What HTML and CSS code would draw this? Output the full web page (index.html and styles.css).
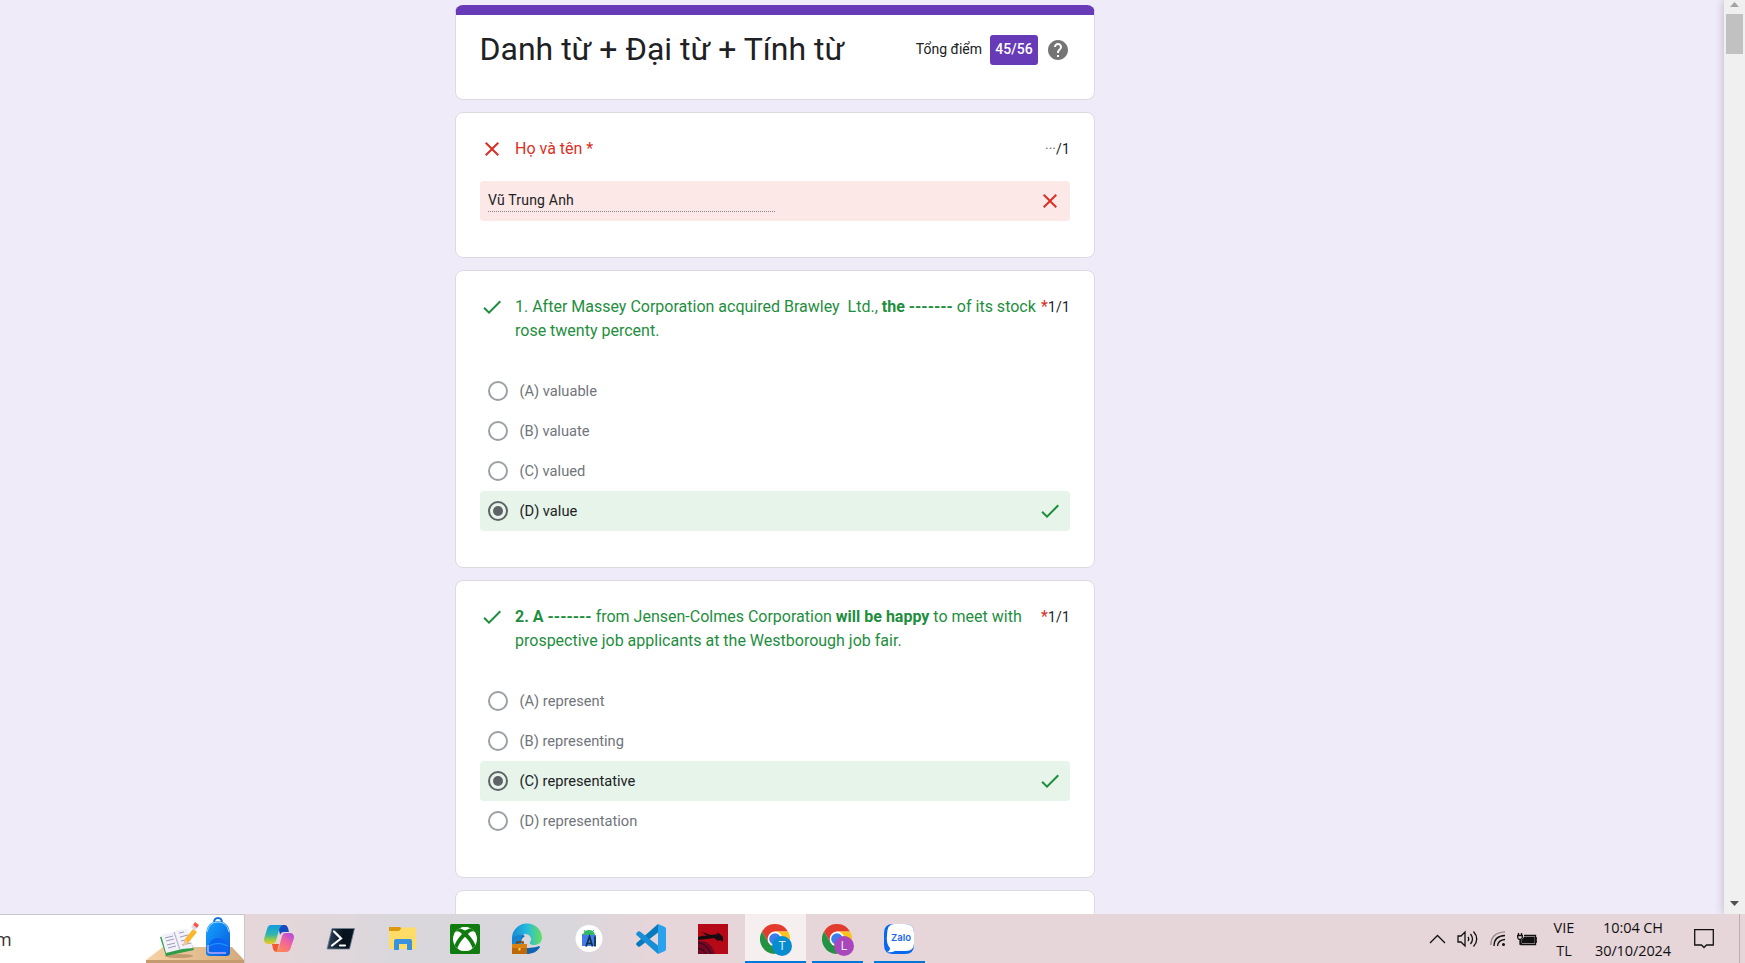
FILE: index.html
```html
<!DOCTYPE html>
<html lang="vi">
<head>
<meta charset="utf-8">
<title>Danh từ + Đại từ + Tính từ</title>
<link rel="stylesheet" href="styles.css">
</head>
<body>
<svg class="defs" aria-hidden="true">
  <symbol id="check" viewBox="0 0 24 24"><path d="M9 16.17 4.83 12l-1.42 1.41L9 19 21 7l-1.41-1.41z"/></symbol>
  <symbol id="cross" viewBox="0 0 24 24"><path d="M19 6.41 17.59 5 12 10.59 6.41 5 5 6.41 10.59 12 5 17.59 6.41 19 12 13.41 17.59 19 19 17.59 13.41 12z"/></symbol>
  <symbol id="chrome" viewBox="0 0 30 30">
    <path fill="#e33b2e" d="M2 7.500A15 15 0 0 1 28 7.500H15L8.500 18.750z"/>
    <path fill="#fcc31e" d="M28 7.500A15 15 0 0 1 15 30L21.500 18.750 15 7.500z"/>
    <path fill="#229342" d="M2 7.500A15 15 0 0 0 15 30L21.500 18.750H8.500z"/>
    <circle cx="15" cy="15" r="7.400" fill="#fff"/><circle cx="15" cy="15" r="5.800" fill="#3b7ded"/>
  </symbol>
</svg>
<div class="screen">
  <div class="browser">
    <main class="form">
      <section class="card header">
        <h1>Danh từ + Đại từ + Tính từ</h1>
        <div class="total"><span>Tổng điểm</span><b>45/56</b>
          <svg class="help" viewBox="0 0 24 24"><path d="M12 2C6.480 2 2 6.480 2 12s4.480 10 10 10 10-4.480 10-10S17.520 2 12 2zm1 17h-2v-2h2v2zm2.070-7.750-.9.920C13.450 12.900 13 13.500 13 15h-2v-.5c0-1.100.450-2.100 1.170-2.830l1.240-1.260c.370-.360.590-.860.590-1.410 0-1.100-.9-2-2-2s-2 .9-2 2H8c0-2.210 1.790-4 4-4s4 1.790 4 4c0 .880-.360 1.680-.930 2.250z"/></svg>
        </div>
      </section>

      <section class="card name">
        <div class="question wrong"><svg class="mark"><use href="#cross"/></svg><p>Họ và tên *</p><span class="points"><i>···</i>/1</span></div>
        <div class="response"><span>Vũ Trung Anh</span><svg class="mark"><use href="#cross"/></svg></div>
      </section>

      <section class="card quiz">
        <div class="question right"><svg class="mark"><use href="#check"/></svg><p>1. After Massey Corporation acquired Brawley&nbsp; Ltd., <b>the -------</b> of its stock rose twenty percent.</p><span class="star">*</span><span class="points">1/1</span></div>
        <div class="options">
          <div class="option"><span class="radio"></span>(A) valuable</div>
          <div class="option"><span class="radio"></span>(B) valuate</div>
          <div class="option"><span class="radio"></span>(C) valued</div>
          <div class="option chosen"><span class="radio"></span>(D) value<svg class="mark"><use href="#check"/></svg></div>
        </div>
      </section>

      <section class="card quiz">
        <div class="question right"><svg class="mark"><use href="#check"/></svg><p><b>2. A -------</b> from Jensen-Colmes Corporation <b>will be happy</b> to meet with prospective job applicants at the Westborough job fair.</p><span class="star">*</span><span class="points">1/1</span></div>
        <div class="options">
          <div class="option"><span class="radio"></span>(A) represent</div>
          <div class="option"><span class="radio"></span>(B) representing</div>
          <div class="option chosen"><span class="radio"></span>(C) representative<svg class="mark"><use href="#check"/></svg></div>
          <div class="option"><span class="radio"></span>(D) representation</div>
        </div>
      </section>
      <section class="card quiz"></section>
    </main>
    <div class="scrollbar">
      <svg class="arrow up" viewBox="0 0 9 5"><path d="M0 5 4.500 0 9 5z"/></svg>
      <div class="thumb"></div>
      <svg class="arrow down" viewBox="0 0 9 5"><path d="M0 0h9L4.500 5z"/></svg>
    </div>
  </div>

  <footer class="taskbar">
    <div class="search"><span>m</span>
      <svg width="98" height="48" viewBox="0 0 98 48">
        <defs><linearGradient id="bag" x1="0" x2="1" y2="1"><stop stop-color="#16a5ff"/><stop offset="1" stop-color="#0758dc"/></linearGradient>
        <linearGradient id="desk"><stop stop-color="#f6d3a6"/><stop offset="1" stop-color="#d4aa7c"/></linearGradient></defs>
        <path d="M0 45 17 32H86L98 45z" fill="url(#desk)"/><path d="M0 45h98v3H0z" fill="#c39b6e"/>
        <ellipse cx="33" cy="41" rx="14" ry="2" fill="#c29b70"/>
        <path d="M14 22 41 17 48 35 20 41z" fill="#2f9e48"/>
        <path d="M15 20 28 17 31 15 41 14 47 33 36 34 20 38z" fill="#f3f2fb"/>
        <path d="M28 17 34 35" stroke="#b9b6cf" stroke-width="1.200"/>
        <path d="m19 23 8-2m-7 5 8-2m-7 6 8-2m-7 5 8-2m3-13 5-1m-4 5 8-2m-7 6 9-2m-8 6 9-2" stroke="#9d9bb5" stroke-width="1"/>
        <path d="m37 31 2-7 8-10 4 3-9 11z" fill="#fdb52a"/><path d="m37 31 2-7 3 4z" fill="#f2c69b"/><path d="m45 12 2-2 4 3-2 3z" fill="#dcdbe8"/><path d="m47 10 2-3 4 3-2 3z" fill="#fb5746"/>
        <path d="M68 8q0-5 4-5t4 5" fill="none" stroke="#1271dc" stroke-width="2"/>
        <path d="M60 20Q60 7 72 6q12 1 12 14v18q0 3-4 3H64q-4 0-4-3z" fill="url(#bag)"/>
        <path d="M61 17Q63 7 72 7t11 10" fill="none" stroke="#a2d4ff" stroke-width="1"/>
        <path d="M63 36v-5q1-8 9-8t10 8v5q0 2-2 2H65q-2 0-2-2z" fill="#0b65f1"/><path d="M63 31q9-5 19 0" fill="none" stroke="#1c9eff"/><path d="M62 30v6q0 2 3 2h15" fill="none" stroke="#b8a7ff" stroke-width="1.500"/>
      </svg>
    </div>
    <nav class="apps">
      <span class="app"><svg viewBox="0 0 30 30"><defs><linearGradient id="c1" x2="0" y2="1"><stop stop-color="#139bdd"/><stop offset=".5" stop-color="#30b5ac"/><stop offset=".8" stop-color="#a3cc3c"/><stop offset="1" stop-color="#f3c52c"/></linearGradient><linearGradient id="c2" x1="1" x2=".3" y2="1"><stop stop-color="#a548ed"/><stop offset=".5" stop-color="#f3649d"/><stop offset="1" stop-color="#ff8952"/></linearGradient></defs>
        <path d="M14 1h7q2 0 3 3l1 4h-5q-3 0-4 3z" fill="#1749c2"/><path d="M8 20h7l-2 8q-3 0-4-3z" fill="#f25b32"/>
        <path d="M7 1h12q-3 1-4 5l-3 11q-1 3-4 3H4q-4 0-4-5L3 5q1-4 4-4z" fill="url(#c1)"/>
        <path d="M21 9h5q4 0 4 5l-3 9q-1 5-5 5H10q4 0 5-5l3-11q1-3 3-3z" fill="url(#c2)"/></svg></span>
      <span class="app"><svg viewBox="0 0 30 30"><defs><linearGradient id="ps"><stop stop-color="#30465e"/><stop offset=".6" stop-color="#07111c"/><stop offset="1" stop-color="#081522"/></linearGradient></defs><path d="M6 4.500h22.500L23.500 25H1z" fill="url(#ps)" stroke="#708193" stroke-width=".8"/><path d="m8 7.500 7 7-9 7m8 0h5" fill="none" stroke="#fff" stroke-width="2.200" stroke-linecap="round"/></svg></span>
      <span class="app"><svg viewBox="0 0 30 30"><path d="M1 3h11l2 2v4H1z" fill="#dc9a0b"/><path d="M1 7h10l3-3.500h14V25H1z" fill="#ffdb68"/><path d="M6 26V17q0-2 2-2h14q2 0 2 2v9h-5v-6h-8v6z" fill="#3892dd"/></svg></span>
      <span class="app"><svg viewBox="0 0 30 30"><defs><clipPath id="ball"><circle cx="15" cy="15" r="12"/></clipPath></defs><rect width="30" height="30" rx="1.500" fill="#107c10"/><circle cx="15" cy="15" r="12" fill="#fff"/><g clip-path="url(#ball)"><path d="M4 4q5-1 11 2.500Q21 3 26 4l-1 4q-4-2-7 2 6 6 9 15l-5 2Q20 18 15 13 10 18 8 27l-5-2Q6 16 12 10 9 6 5 8z" fill="#107c10"/><path d="M6.500 28Q8 19 15 13q7 6 8.500 15z" fill="#fff"/><path d="M9 3.500q6-2 12 0-3 0-6 1.500-3-1.500-6-1.500z" fill="#fff"/></g></svg></span>
      <span class="app"><svg viewBox="0 0 30 30"><defs><linearGradient id="e1"><stop stop-color="#148ad8"/><stop offset=".5" stop-color="#27bbdc"/><stop offset="1" stop-color="#66df5c"/></linearGradient></defs><path d="M0 16A15 15 0 0 1 30 13c0 6-4 8-8 8-3 0-5-1-4-3 3-3 0-8-5-8C5 10 1 14 0 20z" fill="url(#e1)"/><path d="M0 17c2-5 8-8 13-5-4 2-5 7-2 12 4 0 11 0 16-2l1 1c-3 5-8 7-13 7C5 30-1 24 0 17z" fill="#1063b1"/><path d="M0 17q4-7 12-7-4 4-3 10H0z" fill="#1685d2"/><path d="M5 20v-2h6v2" fill="none" stroke="#774305" stroke-width="1.500"/><rect y="20" width="15" height="10" fill="#bd6908"/><path d="M0 20h15v4H0z" fill="#d98111"/><path d="M6.500 24h2v2.500h-2z" fill="#ffda68"/></svg></span>
      <span class="app"><svg viewBox="0 0 30 30"><circle cx="15" cy="14.500" r="13.500" fill="#fff"/><path d="M8 10h3l1 1h10v11H8z" fill="#427bea"/><path d="M9 11q1-5 6-5t6 5z" fill="#32b866"/><path d="m11 8-1-2m8 2 2-2" stroke="#32b866"/><path d="m12 22.500 3.500-10 3 10m-5.500-3h5m3-7v10" fill="none" stroke="#103247" stroke-width="1.700"/></svg></span>
      <span class="app"><svg viewBox="0 0 30 30"><path d="m22 0 7 3q1 1 1 2v20q0 1-1 2l-7 3z" fill="#29a2ee"/><path d="M22 0v8.500L4 22.500q-1 .5-2 0L.5 21q-1-1 0-2z" fill="#0879bd"/><path d="M22 30v-8.500L4 7.500q-1-.5-2 0L.5 9q-1 1 0 2z" fill="#168fd7"/></svg></span>
      <span class="app"><svg viewBox="0 0 30 30"><path fill="#b60917" d="M0 0h30v30H0z"/><path d="M0 17q13-1 17 13H0z" fill="#730724"/><path d="M0 13q6-2 9-1L4 8l9 3 7-1-2-2 4 2 3 3v5l-3-2-2 1-4-3-7 1-9 1z" fill="#190b12"/><path d="M0 19q9 0 13 11M0 24q6 1 8 6" fill="none" stroke="#2b0918"/></svg></span>
      <span class="app active"><svg viewBox="0 0 30 30"><use href="#chrome" width="30" height="30"/><circle cx="22" cy="22" r="10" fill="#078cd0"/><text x="22" y="26">T</text></svg></span>
      <span class="app open"><svg viewBox="0 0 30 30"><use href="#chrome" width="30" height="30"/><circle cx="22" cy="22" r="10" fill="#aa46bb"/><text x="22" y="26">L</text></svg></span>
      <span class="app open"><svg viewBox="0 0 30 30"><path d="M9 0h12q9 0 9 9v12q0 9-9 9H9q-9 0-9-9V9q0-9 9-9z" fill="#0868ef"/><path d="M10 0h11q9 0 9 9v10q0 8-8 8H11q-4 2-8 1 3-1 3-4-4-4-3-13 0-11 7-11z" fill="#fff"/><text class="zalo" x="17" y="17">Zalo</text></svg></span>
    </nav>
    <div class="tray">
      <svg class="chevron" viewBox="0 0 17 10"><path d="m1 9 7.500-7.500L16 9"/></svg>
      <svg class="speaker" viewBox="0 0 21 18"><path d="M1 6h3l4-4v14l-4-4H1zM11 7q1.500 2 0 4m2.500-7q4 5 0 10M16.500 1.500q6.500 7.500 0 15"/></svg>
      <svg class="wifi" viewBox="0 0 16 16"><path opacity=".4" d="M.8 14Q1 1.500 15 .8"/><path d="M4 15Q4 5 15 4.500M7.500 15Q8 9 15 8.500"/><circle cx="13.500" cy="13.500" r="1.500"/></svg>
      <svg class="battery" viewBox="0 0 20 14"><path d="M7 3.500h11.500v9H4V8M18.500 6H20v4h-1.500M1.500 1v2M4.500 1v2M.7 3.500h4.600v2Q5 7.500 3 7.500T.7 5.500zM3 8v4h2"/><path class="charge" d="M7.500 5.500H17v5H5.500V8z"/></svg>
      <div class="lang"><span>VIE</span><span>TL</span></div>
      <div class="clock"><span>10:04 CH</span><span>30/10/2024</span></div>
      <svg class="notice" viewBox="0 0 20 20"><path d="M.7.700h18.600v15.300H12.500L10 18.500 7.500 16H.7z"/></svg>
      <span class="desktop"></span>
    </div>
  </footer>
</div>
</body>
</html>
```
FILE: styles.css
```css
* { box-sizing: border-box; }
body { margin: 0; overflow: hidden; font-family: Roboto, "Liberation Sans", sans-serif; color: #202124; }
p, h1 { margin: 0; font-weight: 400; }
.defs { display: none; }
.screen { display: flex; flex-direction: column; width: 1745px; height: 963px; }

.browser { display: flex; height: 914px; overflow: hidden; background: #f0ebf8; }
.form { display: flex; flex-direction: column; gap: 12px; width: 640px; margin: 5px auto 0 455px; }
.card { flex: none; background: #fff; border: 1px solid #dadce0; border-radius: 8px; padding: 0 24px; }
.header { display: flex; justify-content: space-between; height: 95px; border-top: 10px solid #673ab7; padding-top: 14px; }
.header h1 { margin-left: -.5px; font-size: 32px; line-height: 40px; white-space: nowrap; }
.total { display: flex; align-items: center; height: 30px; margin-top: 6px; font-size: 14px; line-height: 16px; }
.total span { padding-bottom: 2px; }
.total b { display: flex; align-items: center; justify-content: center; width: 48px; height: 30px; margin: 0 8px; padding-bottom: 2px; border-radius: 3px; background: #673ab7; color: #fff; font-weight: 500; }
.help { width: 24px; height: 24px; fill: #757575; }

.name { height: 146px; padding-top: 24px; }
.quiz { height: 298px; padding-top: 24px; }
.question { display: flex; font-size: 16px; line-height: 24px; }
.mark { flex: none; width: 24px; height: 24px; fill: currentColor; }
.question .mark { margin-right: 11px; }
.question p { flex: 1; }
.wrong { color: #d93025; }
.right { color: #1e8e3e; }
.star { width: 7px; margin-left: 3px; color: #d93025; }
.points { color: #202124; font-size: 14px; letter-spacing: .2px; line-height: 25px; }
.points i { color: #70757a; font-style: normal; letter-spacing: 0; }
.response { display: flex; justify-content: space-between; height: 40px; margin-top: 19px; padding: 8px 8px 0 8px; border-radius: 4px; background: #fce8e6; color: #d93025; }
.response span { width: 287px; height: 23px; border-bottom: 1px dotted #80868b; color: #202124; font-size: 14px; line-height: 22px; letter-spacing: .2px; }
.options { margin-top: 28px; }
.option { display: flex; align-items: center; height: 40px; padding: 0 8px; color: #70757a; font-size: 14.667px; }
.radio { display: flex; width: 20px; height: 20px; margin-right: 11.5px; border: 2px solid #9aa0a6; border-radius: 50%; }
.chosen { border-radius: 4px; background: #e6f4ea; color: #202124; }
.chosen .radio { border-color: #5f6368; background: #5f6368; background-clip: content-box; padding: 3px; }
.chosen .mark { margin-left: auto; color: #1e8e3e; }

.scrollbar { display: flex; flex-direction: column; align-items: center; width: 21px; height: 914px; background: #f0f0f0; box-shadow: 0 0 10px rgba(60, 50, 80, .3); }
.thumb { width: 17px; height: 40px; margin-top: 7px; background: #c1c1c1; }
.arrow { width: 9px; height: 5px; }
.up { margin-top: 2px; fill: #a3a3a3; }
.down { margin: auto 0 8px; fill: #505050; }

.taskbar { display: flex; height: 49px; background: linear-gradient(90deg, #e5d6d9 0 280px, #d9d7dc 400px 570px, #e6d5d9 650px); }
.search { display: flex; align-items: flex-start; justify-content: space-between; width: 245px; border: 1px solid #c9c6cc; border-width: 1px 1px 0 0; background: #fff; font-family: "Open Sans", sans-serif; font-size: 18px; color: #333; }
.search span { margin: 12px 0 0 -5px; }
.apps { display: flex; width: 682px; margin-left: 3px; }
.app { display: flex; flex-direction: column; align-items: center; width: 62px; padding-top: 10px; }
.app svg { width: 30px; height: 30px; overflow: visible; }
.app::after { content: ""; width: 51px; height: 2px; margin-top: 7px; }
.open::after { background: #0078d7; }
.active { width: 61px; margin-left: 1px; padding-right: 1px; background: #f5eff0; }
.active::after { width: 61px; margin-right: -1px; background: #0078d7; }
.app text { font: 12px Roboto, sans-serif; fill: #d9effa; text-anchor: middle; }
.app .zalo { font: 600 9.5px Inter, sans-serif; fill: #1769ec; }
.tray { display: flex; align-items: center; margin-left: auto; padding-right: 5px; }
.tray svg { fill: none; stroke: #111; stroke-width: 1.3; }
.tray .chevron { width: 17px; height: 10px; margin-right: 11px; }
.tray .speaker { width: 21px; height: 18px; margin-right: 12px; }
.tray .wifi { width: 16px; height: 16px; margin-right: 11px; }
.wifi circle { fill: #111; stroke: none; }
.tray .battery { width: 20px; height: 14px; }
.battery .charge { fill: #111; }
.lang, .clock { display: flex; flex-direction: column; align-items: center; font-family: "Open Sans", sans-serif; font-size: 14.5px; line-height: 23px; color: #111; }
.lang { width: 54px; }
.clock { width: 84px; letter-spacing: -.1px; }
.tray .notice { width: 20px; height: 20px; margin: 0 25px 0 19px; }
.desktop { width: 1px; height: 49px; background: #bbaeb2; }
```
